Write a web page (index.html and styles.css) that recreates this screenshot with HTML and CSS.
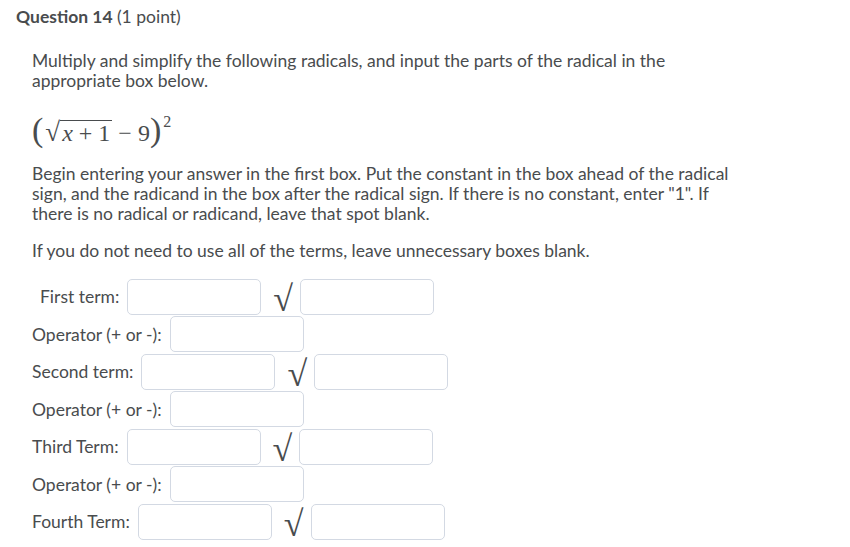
FILE: index.html
```html
<!DOCTYPE html>
<html lang="en">
<head>
    <meta charset="UTF-8">
    <title>Question 14</title>
    <link rel="stylesheet" href="styles.css">
</head>
<body>
    <h2 class="question-title">Question 14 <span class="points">(1 point)</span></h2>

    <div class="question-body">
        <p>Multiply and simplify the following radicals, and input the parts of the radical in the appropriate box below.</p>

        <div class="math">
            <span class="paren">(</span><span class="sqrt">√</span><span class="radicand"><i>x</i><span class="op">+</span>1</span><span class="op">−</span>9<span class="paren">)</span><sup>2</sup>
        </div>

        <p>Begin entering your answer in the first box. Put the constant in the box ahead of the radical sign, and the radicand in the box after the radical sign. If there is no constant, enter "1". If there is no radical or radicand, leave that spot blank.</p>

        <p class="note">If you do not need to use all of the terms, leave unnecessary boxes blank.</p>

        <div class="answer-form">
            <div class="row">
                <label class="first">First term:</label>
                <input type="text"><span class="root">√</span><input type="text">
            </div>
            <div class="row">
                <label>Operator (+ or -):</label>
                <input type="text">
            </div>
            <div class="row">
                <label>Second term:</label>
                <input type="text"><span class="root">√</span><input type="text">
            </div>
            <div class="row">
                <label>Operator (+ or -):</label>
                <input type="text">
            </div>
            <div class="row">
                <label>Third Term:</label>
                <input type="text"><span class="root">√</span><input type="text">
            </div>
            <div class="row">
                <label>Operator (+ or -):</label>
                <input type="text">
            </div>
            <div class="row">
                <label>Fourth Term:</label>
                <input type="text"><span class="root">√</span><input type="text">
            </div>
        </div>
    </div>
</body>
</html>
```

FILE: styles.css
```css
* {
    margin: 0;
    padding: 0;
    box-sizing: border-box;
}

body {
    background-color: #fff;
    color: #494c4e;
    font-family: Lato, "Open Sans", sans-serif;
}

.question-title {
    font-size: 17.5px;
    font-weight: bold;
    padding: 6px 16px 0;
    line-height: 22px;
}

.question-title .points {
    font-weight: normal;
}

.question-body {
    padding: 23px 32px 0;
    max-width: 780px;
}

p {
    font-size: 17.5px;
    line-height: 20px;
}

.math {
    font-family: "Liberation Serif", serif;
    font-size: 24px;
    height: 73px;
    padding-top: 20px;
    display: flex;
    align-items: baseline;
}

.math .paren {
    font-size: 34px;
}

.math .sqrt {
    font-size: 27px;
    margin-left: 2px;
}

.math .radicand {
    border-top: 1px solid #494c4e;
    padding: 0 2px;
    line-height: 24px;
}

.math .op {
    margin: 0 6px;
}

.math sup {
    font-size: 16px;
    position: relative;
    top: -14px;
    margin-left: 2px;
}

.note {
    margin-top: 17px;
}

.answer-form {
    margin-top: 17px;
}

.row {
    display: flex;
    align-items: center;
    height: 37.5px;
    font-size: 17.5px;
}

.row label {
    margin-right: 8px;
}

.row label.first {
    padding-left: 8px;
}

.row input {
    width: 134px;
    height: 36px;
    border: 1px solid #d3d9e3;
    border-radius: 5px;
    background: #fff;
}

.root {
    font-family: "Liberation Serif", serif;
    font-size: 36px;
    align-self: flex-end;
    margin: 0 7px 0 12px;
    line-height: 34px;
}
```
